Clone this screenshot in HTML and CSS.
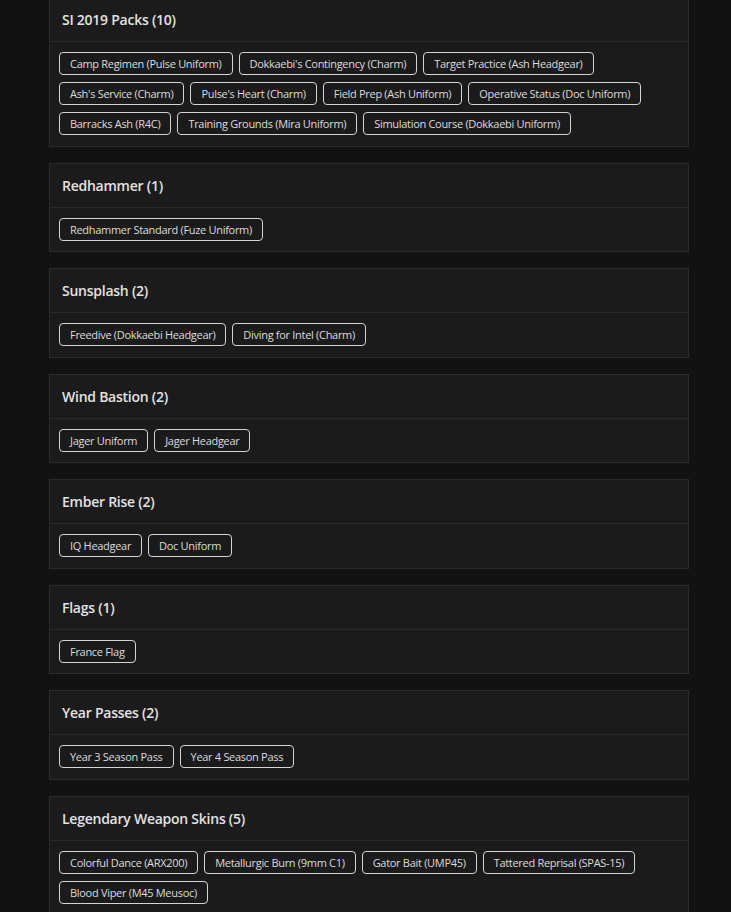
FILE: index.html
```html
<!DOCTYPE html>
<html lang="en">
<head>
  <meta charset="UTF-8" />
  <meta name="viewport" content="width=device-width, initial-scale=1.0" />
  <title>Inventory - Bundles</title>
  <link rel="stylesheet" href="styles.css">
</head>
<body>
  <div class="container">
    <div class="card">
      <div class="card-header">SI 2019 Packs (10)</div>
      <div class="card-body">
        <span class="tag">Camp Regimen (Pulse Uniform)</span>
        <span class="tag">Dokkaebi's Contingency (Charm)</span>
        <span class="tag">Target Practice (Ash Headgear)</span>
        <span class="tag">Ash's Service (Charm)</span>
        <span class="tag">Pulse's Heart (Charm)</span>
        <span class="tag">Field Prep (Ash Uniform)</span>
        <span class="tag">Operative Status (Doc Uniform)</span>
        <span class="tag">Barracks Ash (R4C)</span>
        <span class="tag">Training Grounds (Mira Uniform)</span>
        <span class="tag">Simulation Course (Dokkaebi Uniform)</span>
      </div>
    </div>

    <div class="card">
      <div class="card-header">Redhammer (1)</div>
      <div class="card-body">
        <span class="tag">Redhammer Standard (Fuze Uniform)</span>
      </div>
    </div>

    <div class="card">
      <div class="card-header">Sunsplash (2)</div>
      <div class="card-body">
        <span class="tag">Freedive (Dokkaebi Headgear)</span>
        <span class="tag">Diving for Intel (Charm)</span>
      </div>
    </div>

    <div class="card">
      <div class="card-header">Wind Bastion (2)</div>
      <div class="card-body">
        <span class="tag">Jager Uniform</span>
        <span class="tag">Jager Headgear</span>
      </div>
    </div>

    <div class="card">
      <div class="card-header">Ember Rise (2)</div>
      <div class="card-body">
        <span class="tag">IQ Headgear</span>
        <span class="tag">Doc Uniform</span>
      </div>
    </div>

    <div class="card">
      <div class="card-header">Flags (1)</div>
      <div class="card-body">
        <span class="tag">France Flag</span>
      </div>
    </div>

    <div class="card">
      <div class="card-header">Year Passes (2)</div>
      <div class="card-body">
        <span class="tag">Year 3 Season Pass</span>
        <span class="tag">Year 4 Season Pass</span>
      </div>
    </div>

    <div class="card">
      <div class="card-header">Legendary Weapon Skins (5)</div>
      <div class="card-body">
        <span class="tag">Colorful Dance (ARX200)</span>
        <span class="tag">Metallurgic Burn (9mm C1)</span>
        <span class="tag">Gator Bait (UMP45)</span>
        <span class="tag">Tattered Reprisal (SPAS-15)</span>
        <span class="tag">Blood Viper (M45 Meusoc)</span>
      </div>
    </div>
  </div>
</body>
</html>
```

FILE: styles.css
```css
body {
  margin: 0;
  background-color: #121212;
  font-family: "Open Sans", Arial, sans-serif;
  color: #e2e2e2;
  overflow: hidden;
}
.container {
  width: 640px;
  margin: -3px 0 0 49px;
}
.card {
  background-color: #1b1b1b;
  border: 1px solid #2b2b2b;
  margin-bottom: 16px;
}
.card-header {
  height: 43px;
  line-height: 43px;
  padding: 0 12px;
  border-bottom: 1px solid #2b2b2b;
  font-size: 14px;
  font-weight: 600;
  letter-spacing: -0.25px;
  color: #e2e2e2;
}
.card-body {
  display: flex;
  flex-wrap: wrap;
  gap: 7px 6px;
  padding: 10px 9px 10.5px;
}
.tag {
  height: 21px;
  line-height: 21px;
  padding: 0 10px;
  border: 1px solid #d4d4d4;
  border-radius: 4px;
  font-size: 11px;
  letter-spacing: -0.3px;
  color: #dcdcdc;
  white-space: nowrap;
}
```
